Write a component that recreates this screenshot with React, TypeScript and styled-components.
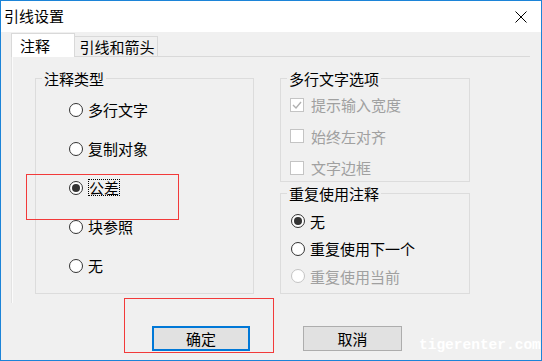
import React from 'react'
import styled, { createGlobalStyle } from 'styled-components'

const GlobalStyle = createGlobalStyle`
  html, body {
    margin: 0;
    padding: 0;
    background: #f0f0f0;
  }
  * {
    box-sizing: border-box;
  }
`

const FONT = `'Noto Sans CJK SC', 'Microsoft YaHei', sans-serif`

const Window = styled.div`
  position: relative;
  width: 542px;
  height: 361px;
  border: 1px solid #1c84d8;
  background: #f0f0f0;
  font-family: ${FONT};
  font-size: 15px;
  line-height: 17px;
  color: #000;
  display: flex;
  flex-direction: column;
  overflow: hidden;
`

const TitleBar = styled.div`
  height: 31px;
  flex: none;
  background: #fff;
  display: flex;
  align-items: center;
  justify-content: space-between;
  padding-left: 3px;
`

const Title = styled.span`
  margin-top: -3px;
`

const CloseButton = styled.div`
  width: 40px;
  height: 31px;
  display: flex;
  align-items: center;
  justify-content: center;
`

const Body = styled.div`
  flex: 1;
  display: flex;
  flex-direction: column;
  padding: 2px 11px 0 10px;
`

const TabRow = styled.div`
  display: flex;
  align-items: flex-end;
  height: 23px;
  position: relative;
  z-index: 1;
  margin-bottom: -1px;
`

const Tab = styled.div<{ active?: boolean }>`
  height: ${({ active }) => (active ? '24px' : '21px')};
  width: ${({ active }) => (active ? '64px' : '84px')};
  margin-left: ${({ active }) => (active ? '0' : '-1px')};
  background: ${({ active }) => (active ? '#fff' : '#f0f0f0')};
  border: 1px solid #d9d9d9;
  border-bottom: ${({ active }) => (active ? 'none' : '1px solid #d9d9d9')};
  display: flex;
  align-items: center;
  justify-content: ${({ active }) => (active ? 'flex-start' : 'center')};
  padding-left: ${({ active }) => (active ? '8px' : '2px')};
  padding-bottom: ${({ active }) => (active ? '1px' : '0')};
  position: relative;
  z-index: ${({ active }) => (active ? 2 : 1)};
`

const Panel = styled.div`
  height: 247px;
  border-top: 1px solid #d9d9d9;
  border-left: 1px solid #e3e3e3;
  box-shadow: inset 1px 0 #fbfbfb;
  padding: 21px 0 0 23px;
  display: grid;
  grid-template-columns: 219px 190px;
  column-gap: 26px;
  align-items: start;
`

const RightColumn = styled.div`
  display: flex;
  flex-direction: column;
  gap: 11px;
`

const GroupBox = styled.div<{ h: number }>`
  position: relative;
  height: ${({ h }) => h}px;
  border: 1px solid #dcdcdc;
`

const Legend = styled.span`
  position: absolute;
  top: -9px;
  left: 6px;
  padding: 0 2px;
  background: #f0f0f0;
`

const OptionList = styled.div<{ pt: number; pl: number; gap: number }>`
  display: flex;
  flex-direction: column;
  padding-top: ${({ pt }) => pt}px;
  padding-left: ${({ pl }) => pl}px;
  gap: ${({ gap }) => gap}px;
`

const Option = styled.div<{ disabled?: boolean }>`
  display: flex;
  align-items: center;
  height: 17px;
  color: ${({ disabled }) => (disabled ? '#a0a0a0' : '#000')};
`

const RadioCircle = styled.span<{ checked?: boolean; disabled?: boolean }>`
  width: 14px;
  height: 14px;
  flex: none;
  border-radius: 50%;
  border: 1px solid ${({ disabled }) => (disabled ? '#c4c4c4' : '#333')};
  background: #fff;
  display: flex;
  align-items: center;
  justify-content: center;
  margin-right: 5px;

  &::after {
    content: '';
    display: ${({ checked }) => (checked ? 'block' : 'none')};
    width: 8px;
    height: 8px;
    border-radius: 50%;
    background: #333;
  }
`

const CheckBox = styled.span`
  width: 14px;
  height: 14px;
  flex: none;
  border: 1px solid #c4c4c4;
  background: #fff;
  display: flex;
  align-items: center;
  justify-content: center;
  margin-right: 7px;
`

const FocusLabel = styled.span`
  outline: 1px dotted #000;
  outline-offset: -1px;
  padding: 0 1px;
`

const ButtonRow = styled.div`
  display: flex;
  margin-top: 23px;
  padding-left: 141px;
  gap: 53px;
`

const Button = styled.div<{ primary?: boolean }>`
  width: ${({ primary }) => (primary ? '98px' : '99px')};
  height: 25px;
  background: #e1e1e1;
  border: ${({ primary }) => (primary ? '2px solid #0078d7' : '1px solid #adadad')};
  display: flex;
  align-items: center;
  justify-content: center;
  padding-bottom: 1px;
`

const Annotation = styled.div<{ x: number; y: number; w: number; h: number }>`
  position: absolute;
  left: ${({ x }) => x}px;
  top: ${({ y }) => y}px;
  width: ${({ w }) => w}px;
  height: ${({ h }) => h}px;
  border: 1px solid #f23a3a;
  pointer-events: none;
`

const Watermark = styled.div`
  position: absolute;
  left: 418px;
  top: 335px;
  font-family: 'Liberation Mono', monospace;
  font-weight: bold;
  font-size: 14.5px;
  line-height: 18px;
  color: #fff;
  white-space: nowrap;
`

const CloseIcon = () => (
  <svg width="12" height="12" viewBox="0 0 12 12">
    <path d="M0.5 0.5 L11.5 11.5 M11.5 0.5 L0.5 11.5" stroke="#000" strokeWidth="1" fill="none" />
  </svg>
)

const CheckMark = () => (
  <svg width="10" height="10" viewBox="0 0 10 10">
    <path d="M1 5 L4 8 L9 2" stroke="#b0b0b0" strokeWidth="1.4" fill="none" />
  </svg>
)

const annotationTypes = ['多行文字', '复制对象', '公差', '块参照', '无']
const selectedType = '公差'

const mtextOptions = [
  { label: '提示输入宽度', checked: true },
  { label: '始终左对齐', checked: false },
  { label: '文字边框', checked: false },
]

const reuseOptions = [
  { label: '无', checked: true, disabled: false },
  { label: '重复使用下一个', checked: false, disabled: false },
  { label: '重复使用当前', checked: false, disabled: true },
]

export default function App() {
  return (
    <>
      <GlobalStyle />
      <Window>
        <TitleBar>
          <Title>引线设置</Title>
          <CloseButton>
            <CloseIcon />
          </CloseButton>
        </TitleBar>
        <Body>
          <TabRow>
            <Tab active>注释</Tab>
            <Tab>引线和箭头</Tab>
          </TabRow>
          <Panel>
            <GroupBox h={216}>
              <Legend>注释类型</Legend>
              <OptionList pt={22} pl={33} gap={22}>
                {annotationTypes.map((t) => (
                  <Option key={t}>
                    <RadioCircle checked={t === selectedType} />
                    {t === selectedType ? <FocusLabel>{t}</FocusLabel> : t}
                  </Option>
                ))}
              </OptionList>
            </GroupBox>
            <RightColumn>
              <GroupBox h={104}>
                <Legend>多行文字选项</Legend>
                <OptionList pt={17} pl={9} gap={14.5}>
                  {mtextOptions.map((o) => (
                    <Option key={o.label} disabled>
                      <CheckBox>{o.checked && <CheckMark />}</CheckBox>
                      {o.label}
                    </Option>
                  ))}
                </OptionList>
              </GroupBox>
              <GroupBox h={101}>
                <Legend>重复使用注释</Legend>
                <OptionList pt={18.5} pl={10} gap={10.5}>
                  {reuseOptions.map((o) => (
                    <Option key={o.label} disabled={o.disabled}>
                      <RadioCircle checked={o.checked} disabled={o.disabled} />
                      {o.label}
                    </Option>
                  ))}
                </OptionList>
              </GroupBox>
            </RightColumn>
          </Panel>
          <ButtonRow>
            <Button primary>确定</Button>
            <Button>取消</Button>
          </ButtonRow>
        </Body>
        <Annotation x={25} y={173} w={153} h={46} />
        <Annotation x={123} y={297} w={150} h={55} />
        <Watermark>tigerenter.com</Watermark>
      </Window>
    </>
  )
}
